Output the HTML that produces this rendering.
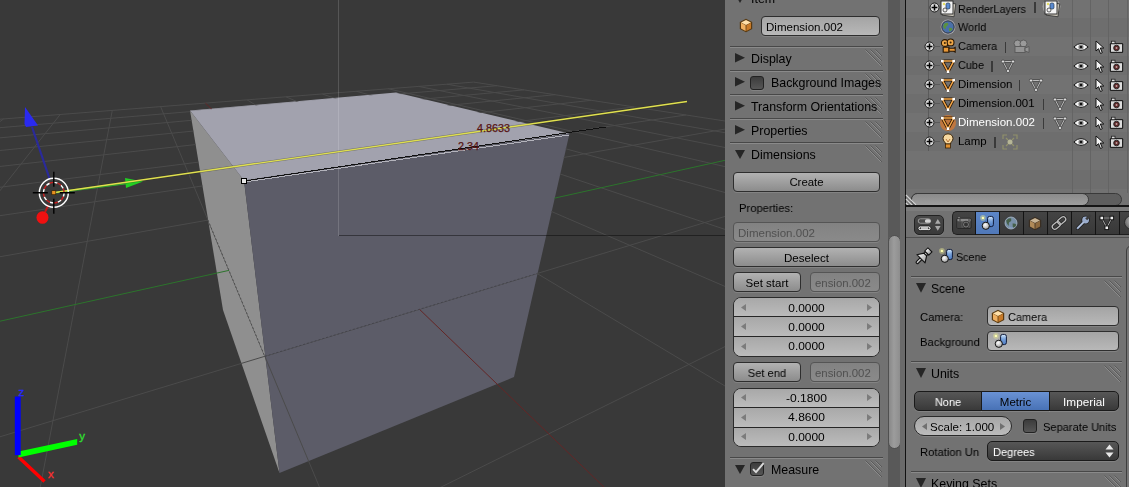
<!DOCTYPE html>
<html><head><meta charset="utf-8"><style>
html,body{margin:0;padding:0;width:1129px;height:487px;overflow:hidden;background:#727272}
body{position:relative;font-family:"Liberation Sans",sans-serif}
.t{position:absolute;white-space:pre;line-height:1;font-family:"Liberation Sans",sans-serif;will-change:transform}
svg{overflow:visible}
</style></head><body>
<svg width="725" height="487" viewBox="0 0 725 487" style="position:absolute;left:0;top:0;display:block">
<defs><clipPath id="outside"><path clip-rule="evenodd" d="M-10 -10H740V500H-10Z M190.0,111.0 L396.0,93.0 L569.0,134.0 L537.1,273.5 L264.8,356.3 L208.0,220.1Z"/></clipPath></defs>
<rect width="725" height="487" fill="#393939"/>
<polygon points="190.0,110.5 244.0,180.5 279.5,473.0 223.0,310.0" fill="#8f8f8f"/>
<polygon points="190.0,110.5 396.0,92.5 569.5,133.5 244.0,180.5" fill="#a2a2ae"/>
<polygon points="244.0,180.5 569.5,133.5 514.0,377.0 279.5,473.0" fill="#5c5c68"/>
<g clip-path="url(#outside)" fill="none" stroke-width="1">
<path d="M-5.0 119.6L473.7 82.1M-5.0 128.1L497.1 85.7M-5.0 138.3L523.9 89.9M-5.0 151.0L554.9 94.7M-5.0 167.0L591.2 100.3M3.6 118.9L-5.0 125.2M-5.0 187.9L634.1 106.9M60.2 114.5L-5.0 197.0M-5.0 216.4L685.9 115.0M112.3 110.4L39.3 492.0M-5.0 257.6L730.0 128.2M160.6 106.6L321.5 492.0M-5.0 438.3L730.0 214.9M247.1 99.9L730.0 389.0M431.1 492.0L730.0 344.1M286.0 96.8L730.0 288.6M322.3 94.0L730.0 231.1M356.4 91.3L730.0 193.9M388.4 88.8L730.0 167.8M418.5 86.4L730.0 148.5M446.9 84.2L730.0 133.6M473.7 82.1L730.0 121.8" stroke="#4b4b4b"/>
<path d="M205.4 103.1L609.1 492.0" stroke="#642626"/>
<path d="M-5.0 322.3L730.0 159.2" stroke="#2c742c"/>
</g>
<path d="M264.8 356.3L537.1 273.5" stroke="#45454d" stroke-dasharray="2 2" fill="none"/>
<path d="M208.0 220.1L264.8 356.3" stroke="#505050" stroke-dasharray="2 2" fill="none"/>
<line x1="338.5" y1="0" x2="338.5" y2="236" stroke="#fff" stroke-opacity="0.15"/>
<line x1="339" y1="235.5" x2="725" y2="235.5" stroke="#000" stroke-opacity="0.42"/>
<line x1="244" y1="182" x2="569" y2="135" stroke="#b4b4bc" stroke-width="1" shape-rendering="crispEdges"/>
<line x1="244" y1="181" x2="606" y2="127" stroke="#101010" stroke-width="1" shape-rendering="crispEdges"/>
<line x1="49.5" y1="178.5" x2="32" y2="127" stroke="#2a2a9a" stroke-width="2.2"/>
<polygon points="25,107 24.5,124 26,127 38,125.5" fill="#2a2af0"/>
<line x1="48.5" y1="205" x2="45" y2="212" stroke="#c01818" stroke-width="2"/>
<ellipse cx="42.5" cy="217.5" rx="6" ry="6.3" fill="#f01010"/>
<line x1="53.8" y1="192.7" x2="128" y2="183" stroke="#30c030" stroke-width="2"/>
<polygon points="125,178 143,181.5 126,188" fill="#22d022"/>
<line x1="55" y1="192.5" x2="687" y2="101.5" stroke="#2a2a10" stroke-width="2.4" stroke-opacity="0.4"/>
<line x1="55" y1="192.5" x2="687" y2="101.5" stroke="#e0e050" stroke-width="1.4"/>
<rect x="241.5" y="178.5" width="5" height="5" fill="#e8e8e8" stroke="#000" stroke-width="1"/>
<circle cx="53.8" cy="192.7" r="14.5" fill="none" stroke="#ffffff" stroke-width="1.4"/>
<circle cx="53.8" cy="192.7" r="10.3" fill="none" stroke="#ffffff" stroke-width="1.4" stroke-dasharray="4 4"/>
<circle cx="53.8" cy="192.7" r="10.3" fill="none" stroke="#c82020" stroke-width="1.4" stroke-dasharray="4 4" stroke-dashoffset="4"/>
<path d="M32.8 192.7H47.8M59.8 192.7H74.8M53.8 171.7V186.7M53.8 198.7V213.7" stroke="#000" stroke-width="1.4"/>
<rect x="51.8" y="190.7" width="4" height="4" fill="#e89020" stroke="#2a1a00" stroke-width="0.6"/>
<text x="477" y="132" font-family="Liberation Sans" font-size="10.8" fill="#561414" stroke="#561414" stroke-width="0.25">4.8633</text>
<text x="458" y="150" font-family="Liberation Sans" font-size="10.8" fill="#561414" stroke="#561414" stroke-width="0.25">2.34</text>
<line x1="18.5" y1="457" x2="44.5" y2="481.5" stroke="#ff0000" stroke-width="3.4"/>
<polygon points="18.5,451.6 77.2,439 77.2,444.8 18.5,457.4" fill="#00ff00"/>
<rect x="14.8" y="396.5" width="5.9" height="58.6" fill="#0000ff"/>
<text x="18.6" y="395.5" font-family="Liberation Sans" font-size="11.5" fill="#2828ff" stroke="#2828ff" stroke-width="0.3">z</text>
<text x="79.3" y="439.8" font-family="Liberation Sans" font-size="11.5" fill="#30e030" stroke="#30e030" stroke-width="0.3">y</text>
<text x="48" y="478.2" font-family="Liberation Sans" font-size="11.5" fill="#ff3030" stroke="#ff3030" stroke-width="0.3">x</text>
</svg>
<div style="position:absolute;left:725px;top:0px;width:163px;height:487px;background:#727272"></div>
<svg style="position:absolute;left:735px;top:-6px" width="10" height="9"><polygon points="0,0 10,0 5.0,9" fill="#262626"/></svg>
<div class="t" style="left:750.5px;top:-7.50px;font-size:12.4px;color:#000;transform-origin:0 0;">Item</div>
<svg style="position:absolute;left:739px;top:18px" width="14" height="15" viewBox="0 0 14 15">
<path d="M7 0.8 L13.2 4 L13.2 11 L7 14.2 L0.8 11 L0.8 4 Z" fill="#5a3a10" />
<path d="M7 2 L12 4.5 L7 7 L2 4.5 Z" fill="#ffe0a8"/>
<path d="M2 4.8 L6.6 7.2 L6.6 13 L2 10.6 Z" fill="#f0b060"/>
<path d="M7.4 7.2 L12 4.8 L12 10.6 L7.4 13 Z" fill="#c87a28"/>
</svg>
<div style="position:absolute;left:761px;top:16px;width:119px;height:20px;box-sizing:border-box;border:1px solid #2e2e2e;border-radius:4px;background:linear-gradient(#a4a4a4,#b8b8b8);box-shadow:0 1px 0 rgba(255,255,255,0.12);"></div>
<div class="t" style="left:766px;top:21.95px;font-size:11.4px;color:#000;transform-origin:0 0;transform:scaleX(1.013);">Dimension.002</div>
<div style="position:absolute;left:730px;top:46px;width:153px;height:1px;background:#484848"></div>
<div style="position:absolute;left:730px;top:47px;width:153px;height:1px;background:#8a8a8a"></div>
<svg style="position:absolute;left:865px;top:49px" width="18" height="18"><path d="M0.5 0.5 L17 17" stroke="#5a5a5a" stroke-width="1" fill="none"/><path d="M0.5 1.5 L16 17" stroke="#8c8c8c" stroke-width="1" fill="none"/><path d="M5.5 0.5 L17 12" stroke="#5a5a5a" stroke-width="1" fill="none"/><path d="M5.5 1.5 L16 12" stroke="#8c8c8c" stroke-width="1" fill="none"/><path d="M10.5 0.5 L17 7" stroke="#5a5a5a" stroke-width="1" fill="none"/><path d="M10.5 1.5 L16 7" stroke="#8c8c8c" stroke-width="1" fill="none"/></svg>
<svg style="position:absolute;left:735px;top:53px" width="10" height="9.6"><polygon points="0,0 10,4.8 0,9.6" fill="#262626"/></svg>
<div class="t" style="left:750.5px;top:52.50px;font-size:12.4px;color:#000;transform-origin:0 0;">Display</div>
<div style="position:absolute;left:730px;top:70px;width:153px;height:1px;background:#484848"></div>
<div style="position:absolute;left:730px;top:71px;width:153px;height:1px;background:#8a8a8a"></div>
<svg style="position:absolute;left:865px;top:73px" width="18" height="18"><path d="M0.5 0.5 L17 17" stroke="#5a5a5a" stroke-width="1" fill="none"/><path d="M0.5 1.5 L16 17" stroke="#8c8c8c" stroke-width="1" fill="none"/><path d="M5.5 0.5 L17 12" stroke="#5a5a5a" stroke-width="1" fill="none"/><path d="M5.5 1.5 L16 12" stroke="#8c8c8c" stroke-width="1" fill="none"/><path d="M10.5 0.5 L17 7" stroke="#5a5a5a" stroke-width="1" fill="none"/><path d="M10.5 1.5 L16 7" stroke="#8c8c8c" stroke-width="1" fill="none"/></svg>
<svg style="position:absolute;left:735px;top:77px" width="10" height="9.6"><polygon points="0,0 10,4.8 0,9.6" fill="#262626"/></svg>
<div style="position:absolute;left:750px;top:76px;width:14px;height:14px;box-sizing:border-box;border:1px solid #222;border-radius:3px;background:linear-gradient(#3c3c3c,#565656);box-shadow:0 1px 0 rgba(255,255,255,0.12);"></div>
<div class="t" style="left:771px;top:76.50px;font-size:12.4px;color:#000;transform-origin:0 0;">Background Images</div>
<div style="position:absolute;left:730px;top:94px;width:153px;height:1px;background:#484848"></div>
<div style="position:absolute;left:730px;top:95px;width:153px;height:1px;background:#8a8a8a"></div>
<svg style="position:absolute;left:865px;top:97px" width="18" height="18"><path d="M0.5 0.5 L17 17" stroke="#5a5a5a" stroke-width="1" fill="none"/><path d="M0.5 1.5 L16 17" stroke="#8c8c8c" stroke-width="1" fill="none"/><path d="M5.5 0.5 L17 12" stroke="#5a5a5a" stroke-width="1" fill="none"/><path d="M5.5 1.5 L16 12" stroke="#8c8c8c" stroke-width="1" fill="none"/><path d="M10.5 0.5 L17 7" stroke="#5a5a5a" stroke-width="1" fill="none"/><path d="M10.5 1.5 L16 7" stroke="#8c8c8c" stroke-width="1" fill="none"/></svg>
<svg style="position:absolute;left:735px;top:101px" width="10" height="9.6"><polygon points="0,0 10,4.8 0,9.6" fill="#262626"/></svg>
<div class="t" style="left:750.5px;top:100.50px;font-size:12.4px;color:#000;transform-origin:0 0;">Transform Orientations</div>
<div style="position:absolute;left:730px;top:118px;width:153px;height:1px;background:#484848"></div>
<div style="position:absolute;left:730px;top:119px;width:153px;height:1px;background:#8a8a8a"></div>
<svg style="position:absolute;left:865px;top:121px" width="18" height="18"><path d="M0.5 0.5 L17 17" stroke="#5a5a5a" stroke-width="1" fill="none"/><path d="M0.5 1.5 L16 17" stroke="#8c8c8c" stroke-width="1" fill="none"/><path d="M5.5 0.5 L17 12" stroke="#5a5a5a" stroke-width="1" fill="none"/><path d="M5.5 1.5 L16 12" stroke="#8c8c8c" stroke-width="1" fill="none"/><path d="M10.5 0.5 L17 7" stroke="#5a5a5a" stroke-width="1" fill="none"/><path d="M10.5 1.5 L16 7" stroke="#8c8c8c" stroke-width="1" fill="none"/></svg>
<svg style="position:absolute;left:735px;top:125px" width="10" height="9.6"><polygon points="0,0 10,4.8 0,9.6" fill="#262626"/></svg>
<div class="t" style="left:750.5px;top:124.50px;font-size:12.4px;color:#000;transform-origin:0 0;">Properties</div>
<div style="position:absolute;left:730px;top:142px;width:153px;height:1px;background:#484848"></div>
<div style="position:absolute;left:730px;top:143px;width:153px;height:1px;background:#8a8a8a"></div>
<svg style="position:absolute;left:735px;top:150px" width="10" height="9"><polygon points="0,0 10,0 5.0,9" fill="#262626"/></svg>
<div class="t" style="left:750.5px;top:148.50px;font-size:12.4px;color:#000;transform-origin:0 0;">Dimensions</div>
<svg style="position:absolute;left:865px;top:145px" width="18" height="18"><path d="M0.5 0.5 L17 17" stroke="#5a5a5a" stroke-width="1" fill="none"/><path d="M0.5 1.5 L16 17" stroke="#8c8c8c" stroke-width="1" fill="none"/><path d="M5.5 0.5 L17 12" stroke="#5a5a5a" stroke-width="1" fill="none"/><path d="M5.5 1.5 L16 12" stroke="#8c8c8c" stroke-width="1" fill="none"/><path d="M10.5 0.5 L17 7" stroke="#5a5a5a" stroke-width="1" fill="none"/><path d="M10.5 1.5 L16 7" stroke="#8c8c8c" stroke-width="1" fill="none"/></svg>
<div style="position:absolute;left:733px;top:172px;width:147px;height:20px;box-sizing:border-box;border:1px solid #2e2e2e;border-radius:4px;background:linear-gradient(#b2b2b2,#8c8c8c);box-shadow:0 1px 0 rgba(255,255,255,0.12);"></div>
<div class="t" style="left:733px;width:147px;text-align:center;top:177.15px;font-size:11.4px;color:#000;transform-origin:50% 0;transform:scaleX(0.994);">Create</div>
<div class="t" style="left:738.5px;top:202.65px;font-size:11.4px;color:#000;transform-origin:0 0;transform:scaleX(0.983);">Properties:</div>
<div style="position:absolute;left:733px;top:222px;width:147px;height:20px;box-sizing:border-box;border:1px solid #555;border-radius:4px;background:linear-gradient(#828282,#8a8a8a);box-shadow:0 1px 0 rgba(255,255,255,0.12);"></div>
<div class="t" style="left:738px;top:227.65px;font-size:11.4px;color:#505050;transform-origin:0 0;transform:scaleX(1.013);">Dimension.002</div>
<div style="position:absolute;left:733px;top:247px;width:147px;height:20px;box-sizing:border-box;border:1px solid #2e2e2e;border-radius:4px;background:linear-gradient(#b2b2b2,#8c8c8c);box-shadow:0 1px 0 rgba(255,255,255,0.12);"></div>
<div class="t" style="left:733px;width:147px;text-align:center;top:252.65px;font-size:11.4px;color:#000;transform-origin:50% 0;transform:scaleX(1.014);">Deselect</div>
<div style="position:absolute;left:733px;top:272px;width:68px;height:20px;box-sizing:border-box;border:1px solid #2e2e2e;border-radius:4px;background:linear-gradient(#b2b2b2,#8c8c8c);box-shadow:0 1px 0 rgba(255,255,255,0.12);"></div>
<div class="t" style="left:733px;width:68px;text-align:center;top:277.65px;font-size:11.4px;color:#000;transform-origin:50% 0;transform:scaleX(1.010);">Set start</div>
<div style="position:absolute;left:810px;top:272px;width:70px;height:20px;box-sizing:border-box;border:1px solid #555;border-radius:4px;background:linear-gradient(#828282,#8a8a8a);box-shadow:0 1px 0 rgba(255,255,255,0.12);"></div>
<div class="t" style="left:815px;top:277.65px;font-size:11.4px;color:#505050;transform-origin:0 0;transform:scaleX(1.000);">ension.002</div>
<div style="position:absolute;left:733px;top:297px;width:147px;height:59.5px;box-sizing:border-box;border:1px solid #2a2a2a;border-radius:8px;overflow:hidden;background:#b0b0b0"></div>
<div style="position:absolute;left:734px;top:298px;width:145px;height:18.5px;background:linear-gradient(#a8a8a8,#bcbcbc);border-radius:7px 7px 0 0;"></div>
<svg style="position:absolute;left:741px;top:303.75px" width="5" height="7"><polygon points="5,0 0,3.5 5,7" fill="#7c7c7c"/></svg>
<svg style="position:absolute;left:867px;top:303.75px" width="5" height="7"><polygon points="0,0 5,3.5 0,7" fill="#7c7c7c"/></svg>
<div class="t" style="left:733px;width:147px;text-align:center;top:302.70px;font-size:11.4px;color:#000;transform-origin:50% 0;transform:scaleX(1.046);">0.0000</div>
<div style="position:absolute;left:734px;top:316.5px;width:145px;height:20px;background:linear-gradient(#a8a8a8,#bcbcbc);"></div>
<div style="position:absolute;left:734px;top:316.0px;width:145px;height:1.3px;background:#262626"></div>
<svg style="position:absolute;left:741px;top:323.0px" width="5" height="7"><polygon points="5,0 0,3.5 5,7" fill="#7c7c7c"/></svg>
<svg style="position:absolute;left:867px;top:323.0px" width="5" height="7"><polygon points="0,0 5,3.5 0,7" fill="#7c7c7c"/></svg>
<div class="t" style="left:733px;width:147px;text-align:center;top:321.95px;font-size:11.4px;color:#000;transform-origin:50% 0;transform:scaleX(1.046);">0.0000</div>
<div style="position:absolute;left:734px;top:336.5px;width:145px;height:19px;background:linear-gradient(#a8a8a8,#bcbcbc);border-radius:0 0 7px 7px;"></div>
<div style="position:absolute;left:734px;top:336.0px;width:145px;height:1.3px;background:#262626"></div>
<svg style="position:absolute;left:741px;top:342.5px" width="5" height="7"><polygon points="5,0 0,3.5 5,7" fill="#7c7c7c"/></svg>
<svg style="position:absolute;left:867px;top:342.5px" width="5" height="7"><polygon points="0,0 5,3.5 0,7" fill="#7c7c7c"/></svg>
<div class="t" style="left:733px;width:147px;text-align:center;top:341.45px;font-size:11.4px;color:#000;transform-origin:50% 0;transform:scaleX(1.046);">0.0000</div>
<div style="position:absolute;left:733px;top:387.5px;width:147px;height:59.5px;box-sizing:border-box;border:1px solid #2a2a2a;border-radius:8px;overflow:hidden;background:#b0b0b0"></div>
<div style="position:absolute;left:734px;top:388.5px;width:145px;height:18.5px;background:linear-gradient(#a8a8a8,#bcbcbc);border-radius:7px 7px 0 0;"></div>
<svg style="position:absolute;left:741px;top:394.25px" width="5" height="7"><polygon points="5,0 0,3.5 5,7" fill="#7c7c7c"/></svg>
<svg style="position:absolute;left:867px;top:394.25px" width="5" height="7"><polygon points="0,0 5,3.5 0,7" fill="#7c7c7c"/></svg>
<div class="t" style="left:733px;width:147px;text-align:center;top:393.20px;font-size:11.4px;color:#000;transform-origin:50% 0;transform:scaleX(1.061);">-0.1800</div>
<div style="position:absolute;left:734px;top:407.0px;width:145px;height:20px;background:linear-gradient(#a8a8a8,#bcbcbc);"></div>
<div style="position:absolute;left:734px;top:406.5px;width:145px;height:1.3px;background:#262626"></div>
<svg style="position:absolute;left:741px;top:413.5px" width="5" height="7"><polygon points="5,0 0,3.5 5,7" fill="#7c7c7c"/></svg>
<svg style="position:absolute;left:867px;top:413.5px" width="5" height="7"><polygon points="0,0 5,3.5 0,7" fill="#7c7c7c"/></svg>
<div class="t" style="left:733px;width:147px;text-align:center;top:412.45px;font-size:11.4px;color:#000;transform-origin:50% 0;transform:scaleX(1.057);">4.8600</div>
<div style="position:absolute;left:734px;top:427.0px;width:145px;height:19px;background:linear-gradient(#a8a8a8,#bcbcbc);border-radius:0 0 7px 7px;"></div>
<div style="position:absolute;left:734px;top:426.5px;width:145px;height:1.3px;background:#262626"></div>
<svg style="position:absolute;left:741px;top:433.0px" width="5" height="7"><polygon points="5,0 0,3.5 5,7" fill="#7c7c7c"/></svg>
<svg style="position:absolute;left:867px;top:433.0px" width="5" height="7"><polygon points="0,0 5,3.5 0,7" fill="#7c7c7c"/></svg>
<div class="t" style="left:733px;width:147px;text-align:center;top:431.95px;font-size:11.4px;color:#000;transform-origin:50% 0;transform:scaleX(1.046);">0.0000</div>
<div style="position:absolute;left:733px;top:362px;width:68px;height:20px;box-sizing:border-box;border:1px solid #2e2e2e;border-radius:4px;background:linear-gradient(#b2b2b2,#8c8c8c);box-shadow:0 1px 0 rgba(255,255,255,0.12);"></div>
<div class="t" style="left:733px;width:68px;text-align:center;top:367.65px;font-size:11.4px;color:#000;transform-origin:50% 0;transform:scaleX(0.974);">Set end</div>
<div style="position:absolute;left:810px;top:362px;width:70px;height:20px;box-sizing:border-box;border:1px solid #555;border-radius:4px;background:linear-gradient(#828282,#8a8a8a);box-shadow:0 1px 0 rgba(255,255,255,0.12);"></div>
<div class="t" style="left:815px;top:367.65px;font-size:11.4px;color:#505050;transform-origin:0 0;transform:scaleX(1.000);">ension.002</div>
<div style="position:absolute;left:730px;top:457px;width:153px;height:1px;background:#484848"></div>
<div style="position:absolute;left:730px;top:458px;width:153px;height:1px;background:#8a8a8a"></div>
<svg style="position:absolute;left:735px;top:465px" width="10" height="9"><polygon points="0,0 10,0 5.0,9" fill="#262626"/></svg>
<div style="position:absolute;left:750px;top:462px;width:14px;height:14px;box-sizing:border-box;border:1px solid #222;border-radius:3px;background:linear-gradient(#3c3c3c,#565656);box-shadow:0 1px 0 rgba(255,255,255,0.12);"></div>
<svg style="position:absolute;left:750px;top:462px" width="14" height="14"><path d="M3 7.2 L6 10.2 L13.6 1.2" stroke="#dcdcdc" stroke-width="1.9" fill="none"/></svg>
<div class="t" style="left:770.5px;top:464.20px;font-size:12.4px;color:#000;transform-origin:0 0;">Measure</div>
<svg style="position:absolute;left:865px;top:460px" width="18" height="18"><path d="M0.5 0.5 L17 17" stroke="#5a5a5a" stroke-width="1" fill="none"/><path d="M0.5 1.5 L16 17" stroke="#8c8c8c" stroke-width="1" fill="none"/><path d="M5.5 0.5 L17 12" stroke="#5a5a5a" stroke-width="1" fill="none"/><path d="M5.5 1.5 L16 12" stroke="#8c8c8c" stroke-width="1" fill="none"/><path d="M10.5 0.5 L17 7" stroke="#5a5a5a" stroke-width="1" fill="none"/><path d="M10.5 1.5 L16 7" stroke="#8c8c8c" stroke-width="1" fill="none"/></svg>
<div style="position:absolute;left:888px;top:0px;width:12px;height:487px;background:#595959"></div>
<div style="position:absolute;left:888px;top:235px;width:13px;height:214px;box-sizing:border-box;border-radius:6.5px;background:linear-gradient(90deg,#888888,#9c9c9c 45%,#8e8e8e);border:1px solid #505050"></div>
<div style="position:absolute;left:900px;top:0px;width:5px;height:487px;background:#6a6a6a"></div>
<div style="position:absolute;left:905px;top:0px;width:1.5px;height:487px;background:#111"></div>

<div style="position:absolute;left:906px;top:0px;width:223px;height:206px;background:#727272"></div>
<div style="position:absolute;left:906px;top:18px;width:223px;height:19px;background:#6e6e6e"></div>
<div style="position:absolute;left:906px;top:56px;width:223px;height:19px;background:#6e6e6e"></div>
<div style="position:absolute;left:906px;top:94px;width:223px;height:19px;background:#6e6e6e"></div>
<div style="position:absolute;left:906px;top:132px;width:223px;height:19px;background:#6e6e6e"></div>
<div style="position:absolute;left:906px;top:170px;width:223px;height:19px;background:#6e6e6e"></div>
<div style="position:absolute;left:906px;top:208px;width:223px;height:19px;background:#6e6e6e"></div>
<div style="position:absolute;left:928px;top:0px;width:1px;height:151px;background:#5a5a5a"></div>
<div style="position:absolute;left:1072px;top:0px;width:1px;height:193px;background:#646464"></div>
<div style="position:absolute;left:1090px;top:0px;width:1px;height:193px;background:#646464"></div>
<div style="position:absolute;left:1108px;top:0px;width:1px;height:193px;background:#646464"></div>
<div style="position:absolute;left:1127px;top:0px;width:1px;height:193px;background:#646464"></div>
<svg style="position:absolute;left:929px;top:2px" width="11" height="11" viewBox="0 0 11 11"><circle cx="5.5" cy="5.5" r="4.5" fill="#d8d8d8" stroke="#1a1a1a" stroke-width="1"/><path d="M2.6 5.5H8.4M5.5 2.6V8.4" stroke="#000" stroke-width="1.5"/></svg>
<svg style="position:absolute;left:940px;top:0px" width="16" height="17" viewBox="0 0 16 17"><rect x="3" y="3" width="12" height="13" fill="#c8c4b8" stroke="#333" stroke-width="0.8" transform="rotate(8 9 9)"/><rect x="1" y="1" width="12" height="13" fill="#f4f4f4" stroke="#222" stroke-width="0.9"/><circle cx="4" cy="4" r="1.2" fill="#e8e060"/><rect x="6" y="3" width="4" height="6" rx="1.5" fill="#5a8ad0" stroke="#123" stroke-width="0.6"/><circle cx="5" cy="10" r="2" fill="#eee" stroke="#222" stroke-width="0.7"/></svg>
<div class="t" style="left:958.2px;top:3.55px;font-size:11.4px;color:#000;transform-origin:0 0;transform:scaleX(0.950);">RenderLayers</div>
<div style="position:absolute;left:1034px;top:2px;width:1.8px;height:11px;background:#3a3a3a"></div>
<svg style="position:absolute;left:1042px;top:-2px" width="20" height="20"><circle cx="9.5" cy="8.5" r="9" fill="#e0e0e0" opacity="0.4"/></svg><svg style="position:absolute;left:1043.5px;top:0px" width="16" height="17" viewBox="0 0 16 17"><rect x="3" y="3" width="12" height="13" fill="#c8c4b8" stroke="#333" stroke-width="0.8" transform="rotate(8 9 9)"/><rect x="1" y="1" width="12" height="13" fill="#f4f4f4" stroke="#222" stroke-width="0.9"/><circle cx="4" cy="4" r="1.2" fill="#e8e060"/><rect x="6" y="3" width="4" height="6" rx="1.5" fill="#5a8ad0" stroke="#123" stroke-width="0.6"/><circle cx="5" cy="10" r="2" fill="#eee" stroke="#222" stroke-width="0.7"/></svg>
<svg style="position:absolute;left:940px;top:19px" width="16" height="16" viewBox="0 0 16 16"><circle cx="8" cy="8" r="7.4" fill="#c8c8d8" opacity="0.7"/><circle cx="8" cy="8" r="6.2" fill="#4a70a8" stroke="#222" stroke-width="0.8"/><path d="M4 5 Q6 3 8 4 Q9 6 7 7 Q5 8 6 10 Q4 10 3 8Z M9 9 Q11 8 12.5 10 Q11 13 9 12Z" fill="#5a9040"/></svg>
<div class="t" style="left:958.2px;top:22.25px;font-size:11.4px;color:#000;transform-origin:0 0;transform:scaleX(0.955);">World</div>
<svg style="position:absolute;left:924px;top:41px" width="11" height="11" viewBox="0 0 11 11"><circle cx="5.5" cy="5.5" r="4.5" fill="#d8d8d8" stroke="#1a1a1a" stroke-width="1"/><path d="M2.6 5.5H8.4M5.5 2.6V8.4" stroke="#000" stroke-width="1.5"/></svg>
<div style="position:absolute;left:934px;top:46px;width:6px;height:1px;background:#5a5a5a"></div>
<svg style="position:absolute;left:940px;top:38.0px" width="17" height="16" viewBox="0 0 17 16"><g stroke="#2a1806" stroke-width="1.1"><circle cx="4.8" cy="5" r="3.4" fill="#f0a848"/><circle cx="10.6" cy="4.4" r="3.4" fill="#f0a848"/><rect x="3.2" y="9.2" width="5.8" height="5" fill="#e89838"/><path d="M9 10.2 L13.6 10.2 L15.2 9.4 L15.2 14 L13.6 13.2 L9 13.2Z" fill="#e89838"/></g><circle cx="4.8" cy="5" r="1" fill="#3a2408"/><circle cx="10.6" cy="4.4" r="1" fill="#3a2408"/></svg>
<div class="t" style="left:958.2px;top:41.45px;font-size:11.4px;color:#000;transform-origin:0 0;transform:scaleX(0.963);">Camera</div>
<div style="position:absolute;left:1004.8px;top:41.5px;width:1.5px;height:11px;background:#3a3a3a"></div>
<svg style="position:absolute;left:1012.8px;top:38.5px" width="17" height="16" viewBox="0 0 17 16" opacity="0.75"><g stroke="#555" stroke-width="1"><circle cx="4.5" cy="4.5" r="3.5" fill="#a8a8a8"/><circle cx="10.5" cy="4.5" r="3.5" fill="#a8a8a8"/><rect x="2" y="7.5" width="10" height="6" fill="#a0a0a0"/><path d="M12 9 L16 7.5 L16 13.5 L12 12 Z" fill="#a0a0a0"/></g></svg>
<svg style="position:absolute;left:1072.5px;top:41.5px" width="16" height="10" viewBox="0 0 16 10"><path d="M0.8 5 Q8 -2 15.2 5 Q8 12 0.8 5Z" fill="#f2f2f2" stroke="#202020" stroke-width="1"/><circle cx="8" cy="5" r="2.6" fill="#8a8a8a"/><circle cx="8" cy="5" r="1.3" fill="#111"/></svg>
<svg style="position:absolute;left:1095px;top:39.5px" width="10" height="15" viewBox="0 0 10 15"><path d="M1 1 L1 11 L3.5 8.7 L5.5 13.5 L7.3 12.7 L5.3 8 L8.8 8 Z" fill="#f4f4f4" stroke="#111" stroke-width="1"/></svg>
<svg style="position:absolute;left:1109px;top:39.5px" width="15" height="14" viewBox="0 0 15 14"><rect x="0.8" y="3" width="13.4" height="10" rx="1.2" fill="#222"/><rect x="2" y="4.2" width="11" height="7.6" fill="#dcdcdc"/><rect x="2.5" y="1.2" width="3.5" height="2.5" fill="#ddd" stroke="#222" stroke-width="0.8"/><circle cx="7.5" cy="8" r="2.8" fill="#602828" stroke="#222" stroke-width="0.9"/><circle cx="7.5" cy="8" r="1" fill="#c0a0a0"/></svg>
<svg style="position:absolute;left:924px;top:60px" width="11" height="11" viewBox="0 0 11 11"><circle cx="5.5" cy="5.5" r="4.5" fill="#d8d8d8" stroke="#1a1a1a" stroke-width="1"/><path d="M2.6 5.5H8.4M5.5 2.6V8.4" stroke="#000" stroke-width="1.5"/></svg>
<div style="position:absolute;left:934px;top:65px;width:6px;height:1px;background:#5a5a5a"></div>
<svg style="position:absolute;left:940px;top:57.5px" width="16" height="16" viewBox="0 0 16 16"><path d="M2.2 3 L13.8 3 L8 13.8 Z" fill="none" stroke="#2a1806" stroke-width="3" stroke-linejoin="round"/><path d="M2.2 3 L13.8 3 L8 13.8 Z" fill="none" stroke="#f4a648" stroke-width="1.5" stroke-linejoin="round"/><rect x="1" y="1.8" width="2.6" height="2.6" fill="#fff"/><rect x="12.4" y="1.8" width="2.6" height="2.6" fill="#fff"/><rect x="6.7" y="12.4" width="2.6" height="2.6" fill="#fff"/></svg>
<div class="t" style="left:958.2px;top:60.45px;font-size:11.4px;color:#000;transform-origin:0 0;transform:scaleX(0.954);">Cube</div>
<div style="position:absolute;left:991.1px;top:60.5px;width:1.5px;height:11px;background:#3a3a3a"></div>
<svg style="position:absolute;left:1000.1px;top:57.5px" width="16" height="16" viewBox="0 0 16 16"><path d="M3 3.5 L13 3.5 L8 13 Z" fill="none" stroke="#4a4a4a" stroke-width="2.4"/><path d="M3 3.5 L13 3.5 L8 13 Z" fill="none" stroke="#bdbdbd" stroke-width="1"/><circle cx="3" cy="3.5" r="1.6" fill="#ddd" stroke="#444" stroke-width="0.7"/><circle cx="13" cy="3.5" r="1.6" fill="#ddd" stroke="#444" stroke-width="0.7"/><circle cx="8" cy="13" r="1.6" fill="#ddd" stroke="#444" stroke-width="0.7"/></svg>
<svg style="position:absolute;left:1072.5px;top:60.5px" width="16" height="10" viewBox="0 0 16 10"><path d="M0.8 5 Q8 -2 15.2 5 Q8 12 0.8 5Z" fill="#f2f2f2" stroke="#202020" stroke-width="1"/><circle cx="8" cy="5" r="2.6" fill="#8a8a8a"/><circle cx="8" cy="5" r="1.3" fill="#111"/></svg>
<svg style="position:absolute;left:1095px;top:58.5px" width="10" height="15" viewBox="0 0 10 15"><path d="M1 1 L1 11 L3.5 8.7 L5.5 13.5 L7.3 12.7 L5.3 8 L8.8 8 Z" fill="#f4f4f4" stroke="#111" stroke-width="1"/></svg>
<svg style="position:absolute;left:1109px;top:58.5px" width="15" height="14" viewBox="0 0 15 14"><rect x="0.8" y="3" width="13.4" height="10" rx="1.2" fill="#222"/><rect x="2" y="4.2" width="11" height="7.6" fill="#dcdcdc"/><rect x="2.5" y="1.2" width="3.5" height="2.5" fill="#ddd" stroke="#222" stroke-width="0.8"/><circle cx="7.5" cy="8" r="2.8" fill="#602828" stroke="#222" stroke-width="0.9"/><circle cx="7.5" cy="8" r="1" fill="#c0a0a0"/></svg>
<svg style="position:absolute;left:924px;top:79px" width="11" height="11" viewBox="0 0 11 11"><circle cx="5.5" cy="5.5" r="4.5" fill="#d8d8d8" stroke="#1a1a1a" stroke-width="1"/><path d="M2.6 5.5H8.4M5.5 2.6V8.4" stroke="#000" stroke-width="1.5"/></svg>
<div style="position:absolute;left:934px;top:84px;width:6px;height:1px;background:#5a5a5a"></div>
<svg style="position:absolute;left:940px;top:76.5px" width="16" height="16" viewBox="0 0 16 16"><path d="M2.2 3 L13.8 3 L8 13.8 Z" fill="none" stroke="#2a1806" stroke-width="3" stroke-linejoin="round"/><path d="M2.2 3 L13.8 3 L8 13.8 Z" fill="none" stroke="#f4a648" stroke-width="1.5" stroke-linejoin="round"/><rect x="1" y="1.8" width="2.6" height="2.6" fill="#fff"/><rect x="12.4" y="1.8" width="2.6" height="2.6" fill="#fff"/><rect x="6.7" y="12.4" width="2.6" height="2.6" fill="#fff"/></svg>
<div class="t" style="left:958.2px;top:79.45px;font-size:11.4px;color:#000;transform-origin:0 0;transform:scaleX(1.012);">Dimension</div>
<div style="position:absolute;left:1018.7px;top:79.5px;width:1.5px;height:11px;background:#3a3a3a"></div>
<svg style="position:absolute;left:1027.7px;top:76.5px" width="16" height="16" viewBox="0 0 16 16"><path d="M3 3.5 L13 3.5 L8 13 Z" fill="none" stroke="#4a4a4a" stroke-width="2.4"/><path d="M3 3.5 L13 3.5 L8 13 Z" fill="none" stroke="#bdbdbd" stroke-width="1"/><circle cx="3" cy="3.5" r="1.6" fill="#ddd" stroke="#444" stroke-width="0.7"/><circle cx="13" cy="3.5" r="1.6" fill="#ddd" stroke="#444" stroke-width="0.7"/><circle cx="8" cy="13" r="1.6" fill="#ddd" stroke="#444" stroke-width="0.7"/></svg>
<svg style="position:absolute;left:1072.5px;top:79.5px" width="16" height="10" viewBox="0 0 16 10"><path d="M0.8 5 Q8 -2 15.2 5 Q8 12 0.8 5Z" fill="#f2f2f2" stroke="#202020" stroke-width="1"/><circle cx="8" cy="5" r="2.6" fill="#8a8a8a"/><circle cx="8" cy="5" r="1.3" fill="#111"/></svg>
<svg style="position:absolute;left:1095px;top:77.5px" width="10" height="15" viewBox="0 0 10 15"><path d="M1 1 L1 11 L3.5 8.7 L5.5 13.5 L7.3 12.7 L5.3 8 L8.8 8 Z" fill="#f4f4f4" stroke="#111" stroke-width="1"/></svg>
<svg style="position:absolute;left:1109px;top:77.5px" width="15" height="14" viewBox="0 0 15 14"><rect x="0.8" y="3" width="13.4" height="10" rx="1.2" fill="#222"/><rect x="2" y="4.2" width="11" height="7.6" fill="#dcdcdc"/><rect x="2.5" y="1.2" width="3.5" height="2.5" fill="#ddd" stroke="#222" stroke-width="0.8"/><circle cx="7.5" cy="8" r="2.8" fill="#602828" stroke="#222" stroke-width="0.9"/><circle cx="7.5" cy="8" r="1" fill="#c0a0a0"/></svg>
<svg style="position:absolute;left:924px;top:98px" width="11" height="11" viewBox="0 0 11 11"><circle cx="5.5" cy="5.5" r="4.5" fill="#d8d8d8" stroke="#1a1a1a" stroke-width="1"/><path d="M2.6 5.5H8.4M5.5 2.6V8.4" stroke="#000" stroke-width="1.5"/></svg>
<div style="position:absolute;left:934px;top:103px;width:6px;height:1px;background:#5a5a5a"></div>
<svg style="position:absolute;left:940px;top:95.5px" width="16" height="16" viewBox="0 0 16 16"><path d="M2.2 3 L13.8 3 L8 13.8 Z" fill="none" stroke="#2a1806" stroke-width="3" stroke-linejoin="round"/><path d="M2.2 3 L13.8 3 L8 13.8 Z" fill="none" stroke="#f4a648" stroke-width="1.5" stroke-linejoin="round"/><rect x="1" y="1.8" width="2.6" height="2.6" fill="#fff"/><rect x="12.4" y="1.8" width="2.6" height="2.6" fill="#fff"/><rect x="6.7" y="12.4" width="2.6" height="2.6" fill="#fff"/></svg>
<div class="t" style="left:958.2px;top:98.45px;font-size:11.4px;color:#000;transform-origin:0 0;transform:scaleX(1.008);">Dimension.001</div>
<div style="position:absolute;left:1042.5px;top:98.5px;width:1.5px;height:11px;background:#3a3a3a"></div>
<svg style="position:absolute;left:1051.5px;top:95.5px" width="16" height="16" viewBox="0 0 16 16"><path d="M3 3.5 L13 3.5 L8 13 Z" fill="none" stroke="#4a4a4a" stroke-width="2.4"/><path d="M3 3.5 L13 3.5 L8 13 Z" fill="none" stroke="#bdbdbd" stroke-width="1"/><circle cx="3" cy="3.5" r="1.6" fill="#ddd" stroke="#444" stroke-width="0.7"/><circle cx="13" cy="3.5" r="1.6" fill="#ddd" stroke="#444" stroke-width="0.7"/><circle cx="8" cy="13" r="1.6" fill="#ddd" stroke="#444" stroke-width="0.7"/></svg>
<svg style="position:absolute;left:1072.5px;top:98.5px" width="16" height="10" viewBox="0 0 16 10"><path d="M0.8 5 Q8 -2 15.2 5 Q8 12 0.8 5Z" fill="#f2f2f2" stroke="#202020" stroke-width="1"/><circle cx="8" cy="5" r="2.6" fill="#8a8a8a"/><circle cx="8" cy="5" r="1.3" fill="#111"/></svg>
<svg style="position:absolute;left:1095px;top:96.5px" width="10" height="15" viewBox="0 0 10 15"><path d="M1 1 L1 11 L3.5 8.7 L5.5 13.5 L7.3 12.7 L5.3 8 L8.8 8 Z" fill="#f4f4f4" stroke="#111" stroke-width="1"/></svg>
<svg style="position:absolute;left:1109px;top:96.5px" width="15" height="14" viewBox="0 0 15 14"><rect x="0.8" y="3" width="13.4" height="10" rx="1.2" fill="#222"/><rect x="2" y="4.2" width="11" height="7.6" fill="#dcdcdc"/><rect x="2.5" y="1.2" width="3.5" height="2.5" fill="#ddd" stroke="#222" stroke-width="0.8"/><circle cx="7.5" cy="8" r="2.8" fill="#602828" stroke="#222" stroke-width="0.9"/><circle cx="7.5" cy="8" r="1" fill="#c0a0a0"/></svg>
<svg style="position:absolute;left:924px;top:117px" width="11" height="11" viewBox="0 0 11 11"><circle cx="5.5" cy="5.5" r="4.5" fill="#d8d8d8" stroke="#1a1a1a" stroke-width="1"/><path d="M2.6 5.5H8.4M5.5 2.6V8.4" stroke="#000" stroke-width="1.5"/></svg>
<div style="position:absolute;left:934px;top:122px;width:6px;height:1px;background:#5a5a5a"></div>
<svg style="position:absolute;left:940px;top:114.5px" width="16" height="16" viewBox="0 0 16 16"><circle cx="8" cy="8" r="8" fill="#c8783a" opacity="0.9"/><path d="M2.2 3 L13.8 3 L8 13.8 Z" fill="none" stroke="#2a1806" stroke-width="3" stroke-linejoin="round"/><path d="M2.2 3 L13.8 3 L8 13.8 Z" fill="none" stroke="#f4a648" stroke-width="1.5" stroke-linejoin="round"/><rect x="1" y="1.8" width="2.6" height="2.6" fill="#fff"/><rect x="12.4" y="1.8" width="2.6" height="2.6" fill="#fff"/><rect x="6.7" y="12.4" width="2.6" height="2.6" fill="#fff"/></svg>
<div class="t" style="left:958.2px;top:117.45px;font-size:11.4px;color:#fff;transform-origin:0 0;transform:scaleX(1.013);">Dimension.002</div>
<div style="position:absolute;left:1042.5px;top:117.5px;width:1.5px;height:11px;background:#3a3a3a"></div>
<svg style="position:absolute;left:1051.5px;top:114.5px" width="16" height="16" viewBox="0 0 16 16"><path d="M3 3.5 L13 3.5 L8 13 Z" fill="none" stroke="#4a4a4a" stroke-width="2.4"/><path d="M3 3.5 L13 3.5 L8 13 Z" fill="none" stroke="#bdbdbd" stroke-width="1"/><circle cx="3" cy="3.5" r="1.6" fill="#ddd" stroke="#444" stroke-width="0.7"/><circle cx="13" cy="3.5" r="1.6" fill="#ddd" stroke="#444" stroke-width="0.7"/><circle cx="8" cy="13" r="1.6" fill="#ddd" stroke="#444" stroke-width="0.7"/></svg>
<svg style="position:absolute;left:1072.5px;top:117.5px" width="16" height="10" viewBox="0 0 16 10"><path d="M0.8 5 Q8 -2 15.2 5 Q8 12 0.8 5Z" fill="#f2f2f2" stroke="#202020" stroke-width="1"/><circle cx="8" cy="5" r="2.6" fill="#8a8a8a"/><circle cx="8" cy="5" r="1.3" fill="#111"/></svg>
<svg style="position:absolute;left:1095px;top:115.5px" width="10" height="15" viewBox="0 0 10 15"><path d="M1 1 L1 11 L3.5 8.7 L5.5 13.5 L7.3 12.7 L5.3 8 L8.8 8 Z" fill="#f4f4f4" stroke="#111" stroke-width="1"/></svg>
<svg style="position:absolute;left:1109px;top:115.5px" width="15" height="14" viewBox="0 0 15 14"><rect x="0.8" y="3" width="13.4" height="10" rx="1.2" fill="#222"/><rect x="2" y="4.2" width="11" height="7.6" fill="#dcdcdc"/><rect x="2.5" y="1.2" width="3.5" height="2.5" fill="#ddd" stroke="#222" stroke-width="0.8"/><circle cx="7.5" cy="8" r="2.8" fill="#602828" stroke="#222" stroke-width="0.9"/><circle cx="7.5" cy="8" r="1" fill="#c0a0a0"/></svg>
<svg style="position:absolute;left:924px;top:136px" width="11" height="11" viewBox="0 0 11 11"><circle cx="5.5" cy="5.5" r="4.5" fill="#d8d8d8" stroke="#1a1a1a" stroke-width="1"/><path d="M2.6 5.5H8.4M5.5 2.6V8.4" stroke="#000" stroke-width="1.5"/></svg>
<div style="position:absolute;left:934px;top:141px;width:6px;height:1px;background:#5a5a5a"></div>
<svg style="position:absolute;left:942px;top:133.0px" width="12" height="16" viewBox="0 0 12 16"><path d="M6 0.8 C9.5 0.8 11 3.5 11 5.5 C11 8 8.5 9 8.5 11 L3.5 11 C3.5 9 1 8 1 5.5 C1 3.5 2.5 0.8 6 0.8Z" fill="#f6d8a0" stroke="#3a2408" stroke-width="1"/><path d="M4 6 L6 9 L8 6" stroke="#b06020" fill="none" stroke-width="0.8"/><rect x="3.5" y="11" width="5" height="4" fill="#e09030" stroke="#3a2408" stroke-width="0.8"/></svg>
<div class="t" style="left:958.2px;top:136.45px;font-size:11.4px;color:#000;transform-origin:0 0;transform:scaleX(1.004);">Lamp</div>
<div style="position:absolute;left:994px;top:136.5px;width:1.5px;height:11px;background:#3a3a3a"></div>
<svg style="position:absolute;left:1002px;top:133.5px" width="16" height="16" viewBox="0 0 16 16" opacity="0.8"><g stroke="#9a9a6a" stroke-width="1.2" fill="none"><path d="M1 5V1H5M11 1H15V5M15 11V15H11M5 15H1V11"/><path d="M4 4L6 6M12 4L10 6M4 12L6 10M12 12L10 10"/></g><circle cx="8" cy="8" r="2.5" fill="#c8c8a0"/></svg>
<svg style="position:absolute;left:1072.5px;top:136.5px" width="16" height="10" viewBox="0 0 16 10"><path d="M0.8 5 Q8 -2 15.2 5 Q8 12 0.8 5Z" fill="#f2f2f2" stroke="#202020" stroke-width="1"/><circle cx="8" cy="5" r="2.6" fill="#8a8a8a"/><circle cx="8" cy="5" r="1.3" fill="#111"/></svg>
<svg style="position:absolute;left:1095px;top:134.5px" width="10" height="15" viewBox="0 0 10 15"><path d="M1 1 L1 11 L3.5 8.7 L5.5 13.5 L7.3 12.7 L5.3 8 L8.8 8 Z" fill="#f4f4f4" stroke="#111" stroke-width="1"/></svg>
<svg style="position:absolute;left:1109px;top:134.5px" width="15" height="14" viewBox="0 0 15 14"><rect x="0.8" y="3" width="13.4" height="10" rx="1.2" fill="#222"/><rect x="2" y="4.2" width="11" height="7.6" fill="#dcdcdc"/><rect x="2.5" y="1.2" width="3.5" height="2.5" fill="#ddd" stroke="#222" stroke-width="0.8"/><circle cx="7.5" cy="8" r="2.8" fill="#602828" stroke="#222" stroke-width="0.9"/><circle cx="7.5" cy="8" r="1" fill="#c0a0a0"/></svg>
<div style="position:absolute;left:910.5px;top:193px;width:211.5px;height:13px;box-sizing:border-box;border-radius:6.5px;background:#5e5e5e;border:1px solid #3a3a3a"></div>
<div style="position:absolute;left:910.5px;top:193px;width:178px;height:13px;box-sizing:border-box;border-radius:6.5px;background:linear-gradient(#8a8a8a,#9e9e9e);border:1px solid #3a3a3a"></div>
<svg style="position:absolute;left:906px;top:194px" width="12" height="12"><path d="M0 1L11 12M0 5L7 12M0 9L3 12" stroke="#d0d0d0" stroke-width="1.2"/></svg>
<div style="position:absolute;left:906px;top:205px;width:223px;height:2px;background:#151515"></div>
<div style="position:absolute;left:906px;top:207px;width:223px;height:31px;background:#727272"></div>
<div style="position:absolute;left:906px;top:207px;width:223px;height:4px;background:#7c7c7c"></div>
<div style="position:absolute;left:906px;top:236.5px;width:223px;height:1.5px;background:#505050"></div>
<div style="position:absolute;left:914px;top:215px;width:30px;height:19.5px;box-sizing:border-box;border:1px solid #222;border-radius:5px;background:linear-gradient(#484848,#3a3a3a);box-shadow:0 1px 0 rgba(255,255,255,0.12);"></div>
<svg style="position:absolute;left:914px;top:215px" width="30" height="20" viewBox="0 0 30 20"><rect x="4.2" y="3.8" width="12.5" height="4.4" rx="2.2" fill="#4a4a4a" stroke="#111" stroke-width="0.8"/><rect x="4.2" y="3.8" width="12.5" height="4.4" rx="2.2" fill="none" stroke="#d8d8d8" stroke-width="0.7"/><rect x="11" y="4.2" width="5.4" height="3.6" rx="1.6" fill="#d4d4d4"/><rect x="4" y="11" width="13" height="4.6" rx="2.3" fill="#f0f0f0" stroke="#111" stroke-width="0.8"/><rect x="7" y="12.2" width="7" height="2.2" fill="#bcbcbc"/><path d="M5.2 13.3L6.8 12V14.6Z M15.8 13.3L14.2 12V14.6Z" fill="#111"/><path d="M21 8.8L23.8 4L26.6 8.8Z M21 11L23.8 15.8L26.6 11Z" fill="#a8a8a8"/></svg><div style="position:absolute;left:952px;top:211px;width:177px;height:23.5px;box-sizing:border-box;border-radius:5px 0 0 5px;background:linear-gradient(#444444,#393939);border:1px solid #1e1e1e;border-right:none"></div>
<div style="position:absolute;left:975px;top:211px;width:24px;height:23.5px;background:linear-gradient(#5c86c8,#5078b8);border-top:1px solid #1e1e1e;border-bottom:1px solid #1e1e1e;box-sizing:border-box"></div>
<div style="position:absolute;left:975px;top:211px;width:1px;height:23.5px;background:#141414"></div>
<div style="position:absolute;left:999px;top:211px;width:1px;height:23.5px;background:#141414"></div>
<div style="position:absolute;left:1023px;top:211px;width:1px;height:23.5px;background:#141414"></div>
<div style="position:absolute;left:1047px;top:211px;width:1px;height:23.5px;background:#141414"></div>
<div style="position:absolute;left:1071px;top:211px;width:1px;height:23.5px;background:#141414"></div>
<div style="position:absolute;left:1095px;top:211px;width:1px;height:23.5px;background:#141414"></div>
<div style="position:absolute;left:1119px;top:211px;width:1px;height:23.5px;background:#141414"></div>
<svg style="position:absolute;left:956px;top:215px" width="16" height="16" viewBox="0 0 16 16"><rect x="1.5" y="1.8" width="3" height="2" rx="0.8" fill="#a0a0a0" stroke="#222" stroke-width="0.6"/><rect x="1" y="3.3" width="14" height="10" rx="1" fill="#5e5e5e" stroke="#1e1e1e" stroke-width="0.9"/><rect x="1.5" y="3.8" width="13" height="2.4" fill="#8a8a8a"/><circle cx="4" cy="5" r="0.8" fill="#333"/><circle cx="13" cy="5" r="0.8" fill="#333"/><circle cx="10" cy="9.6" r="3.4" fill="#7a7a7a" stroke="#2a2a2a" stroke-width="0.8"/><circle cx="10" cy="9.6" r="2" fill="#333"/><rect x="1.5" y="6.5" width="4" height="6.5" fill="#454545"/></svg><svg style="position:absolute;left:979px;top:214.5px" width="16" height="16" viewBox="0 0 16 16"><defs><linearGradient id="cyl1" x1="0" y1="0" x2="0" y2="1"><stop offset="0" stop-color="#d8ecff"/><stop offset="0.45" stop-color="#7aa4dc"/><stop offset="1" stop-color="#4a78c0"/></linearGradient><radialGradient id="sph1" cx="0.4" cy="0.35" r="0.7"><stop offset="0" stop-color="#ffffff"/><stop offset="1" stop-color="#9a9a9a"/></radialGradient></defs><circle cx="3.9" cy="2.9" r="2.8" fill="#e8e890" opacity="0.45"/><circle cx="3.9" cy="2.9" r="1.2" fill="#ffffb0"/><rect x="8.6" y="1.4" width="5.8" height="10.2" rx="2" fill="url(#cyl1)" stroke="#0e1a3a" stroke-width="1"/><circle cx="6.8" cy="10.8" r="3.6" fill="url(#sph1)" stroke="#111" stroke-width="1"/></svg>
<svg style="position:absolute;left:1003px;top:215px" width="16" height="16" viewBox="0 0 16 16"><circle cx="8" cy="8" r="6.8" fill="#2e3440" /><circle cx="8" cy="8" r="6" fill="#7890a8" stroke="#a8b4bc" stroke-width="0.9"/><path d="M3.2 5.5 Q5.5 2.6 8.2 3.4 Q8.8 6 7 6.8 Q5.2 7.6 6 10.8 Q3.6 9.6 3.2 5.5Z M9.6 8.6 Q12 8 13.4 9.8 Q12.4 12.8 9.8 12.6Z" fill="#46604a"/><path d="M6 12 Q8 13.5 10 12.8" stroke="#8aa0c8" stroke-width="1" fill="none"/></svg><svg style="position:absolute;left:1028px;top:215.5px" width="14" height="15" viewBox="0 0 14 15"><path d="M7 0.8 L13.2 4 L13.2 11 L7 14.2 L0.8 11 L0.8 4 Z" fill="#3a2e22" /><path d="M7 2 L12 4.5 L7 7 L2 4.5 Z" fill="#c8b494"/><path d="M2 4.8 L6.6 7.2 L6.6 13 L2 10.6 Z" fill="#b08a58"/><path d="M7.4 7.2 L12 4.8 L12 10.6 L7.4 13 Z" fill="#8e6a3e"/></svg><svg style="position:absolute;left:1051px;top:215px" width="17" height="16" viewBox="0 0 17 16"><g fill="none"><rect x="0.8" y="8" width="9" height="5" rx="2.5" transform="rotate(-40 5.3 10.5)" stroke="#202020" stroke-width="2.6"/><rect x="6.2" y="3" width="9" height="5" rx="2.5" transform="rotate(-40 10.7 5.5)" stroke="#202020" stroke-width="2.6"/><rect x="0.8" y="8" width="9" height="5" rx="2.5" transform="rotate(-40 5.3 10.5)" stroke="#bdbdbd" stroke-width="1.3"/><rect x="6.2" y="3" width="9" height="5" rx="2.5" transform="rotate(-40 10.7 5.5)" stroke="#bdbdbd" stroke-width="1.3"/></g></svg><svg style="position:absolute;left:1075px;top:214px" width="16" height="17" viewBox="0 0 16 17"><g stroke-linecap="round"><path d="M2.6 14.2 L9 7.8" stroke="#1e1e1e" stroke-width="3.6"/><circle cx="10.6" cy="6" r="4.2" fill="#1e1e1e"/><path d="M2.6 14.2 L9 7.8" stroke="#9aaccc" stroke-width="2"/><circle cx="10.6" cy="6" r="3.4" fill="#9aaccc"/><path d="M11.2 5.4 L15.5 1.1" stroke="#3c3c3c" stroke-width="2.6" stroke-linecap="butt"/></g><path d="M3 13.8 L8.6 8.2" stroke="#d8e0ee" stroke-width="0.6"/></svg><svg style="position:absolute;left:1099px;top:214px" width="16" height="17" viewBox="0 0 16 17"><path d="M2.8 4 L12.8 4 L7.8 13.8 Z" fill="none" stroke="#222" stroke-width="2.2"/><path d="M2.8 4 L12.8 4 L7.8 13.8 Z" fill="none" stroke="#b8b8b8" stroke-width="0.9"/><rect x="1" y="2.2" width="3.6" height="3.6" fill="#f0f0f0" stroke="#111" stroke-width="0.9"/><rect x="11" y="2.2" width="3.6" height="3.6" fill="#f0f0f0" stroke="#111" stroke-width="0.9"/><rect x="6" y="12" width="3.6" height="3.6" fill="#f0f0f0" stroke="#111" stroke-width="0.9"/></svg><svg style="position:absolute;left:1120px;top:214px" width="9" height="17"><defs><radialGradient id="mg" cx="0.7" cy="0.35" r="0.7"><stop offset="0" stop-color="#d0d0d0"/><stop offset="1" stop-color="#6a6a6a"/></radialGradient></defs><circle cx="11" cy="8.5" r="6.5" fill="url(#mg)" stroke="#2a2a2a" stroke-width="1"/></svg>
<div style="position:absolute;left:906px;top:238px;width:223px;height:249px;background:#727272"></div>
<div style="position:absolute;left:1126px;top:245px;width:12px;height:250px;box-sizing:border-box;border:1px solid #3e3e3e;border-radius:6px;background:#767676"></div>
<svg style="position:absolute;left:912px;top:244px" width="24" height="24" viewBox="0 0 24 24"><defs><linearGradient id="ping" x1="0" y1="0" x2="0" y2="1"><stop offset="0" stop-color="#ffffff"/><stop offset="1" stop-color="#9a9a9a"/></linearGradient></defs><g transform="translate(4.6,19.2) rotate(-45)" stroke="#111" stroke-width="1.1" stroke-linejoin="round" fill="url(#ping)"><rect x="0" y="-1.3" width="6.5" height="2.6" rx="1"/><path d="M6.2 -5.8 L6.2 5.8 L12.5 1.7 L12.5 -1.7 Z"/><rect x="12.3" y="-1.7" width="2.4" height="3.4"/><rect x="14.3" y="-2.9" width="4.6" height="5.8"/></g></svg><svg style="position:absolute;left:938px;top:248px" width="16" height="16" viewBox="0 0 16 16"><defs><linearGradient id="cyl2" x1="0" y1="0" x2="0" y2="1"><stop offset="0" stop-color="#d8ecff"/><stop offset="0.45" stop-color="#7aa4dc"/><stop offset="1" stop-color="#4a78c0"/></linearGradient><radialGradient id="sph2" cx="0.4" cy="0.35" r="0.7"><stop offset="0" stop-color="#ffffff"/><stop offset="1" stop-color="#9a9a9a"/></radialGradient></defs><circle cx="3.9" cy="2.9" r="2.8" fill="#e8e890" opacity="0.45"/><circle cx="3.9" cy="2.9" r="1.2" fill="#ffffb0"/><rect x="8.6" y="1.4" width="5.8" height="10.2" rx="2" fill="url(#cyl2)" stroke="#0e1a3a" stroke-width="1"/><circle cx="6.8" cy="10.8" r="3.6" fill="url(#sph2)" stroke="#111" stroke-width="1"/></svg>
<div class="t" style="left:955.5px;top:252.15px;font-size:11.4px;color:#000;transform-origin:0 0;transform:scaleX(0.939);">Scene</div>
<div style="position:absolute;left:911px;top:276px;width:211px;height:1px;background:#484848"></div>
<div style="position:absolute;left:911px;top:277px;width:211px;height:1px;background:#8a8a8a"></div>
<svg style="position:absolute;left:916px;top:282.8px" width="10" height="9.8"><polygon points="0,0 10,0 5.0,9.8" fill="#262626"/></svg>
<div class="t" style="left:931.1px;top:282.90px;font-size:12.4px;color:#000;transform-origin:0 0;transform:scaleX(0.965);transform-origin:0 0">Scene</div>
<svg style="position:absolute;left:1104px;top:280px" width="18" height="18"><path d="M0.5 0.5 L17 17" stroke="#5a5a5a" stroke-width="1" fill="none"/><path d="M0.5 1.5 L16 17" stroke="#8c8c8c" stroke-width="1" fill="none"/><path d="M5.5 0.5 L17 12" stroke="#5a5a5a" stroke-width="1" fill="none"/><path d="M5.5 1.5 L16 12" stroke="#8c8c8c" stroke-width="1" fill="none"/><path d="M10.5 0.5 L17 7" stroke="#5a5a5a" stroke-width="1" fill="none"/><path d="M10.5 1.5 L16 7" stroke="#8c8c8c" stroke-width="1" fill="none"/></svg>
<div class="t" style="left:919.5px;top:311.95px;font-size:11.4px;color:#000;transform-origin:0 0;transform:scaleX(0.988);">Camera:</div>
<div style="position:absolute;left:987px;top:306px;width:132px;height:20px;box-sizing:border-box;border:1px solid #2e2e2e;border-radius:4px;background:linear-gradient(#a4a4a4,#b8b8b8);box-shadow:0 1px 0 rgba(255,255,255,0.12);"></div>
<svg style="position:absolute;left:990.5px;top:308.5px" width="14" height="15" viewBox="0 0 14 15">
<path d="M7 0.8 L13.2 4 L13.2 11 L7 14.2 L0.8 11 L0.8 4 Z" fill="#5a3a10" />
<path d="M7 2 L12 4.5 L7 7 L2 4.5 Z" fill="#ffe0a8"/>
<path d="M2 4.8 L6.6 7.2 L6.6 13 L2 10.6 Z" fill="#f0b060"/>
<path d="M7.4 7.2 L12 4.8 L12 10.6 L7.4 13 Z" fill="#c87a28"/>
</svg>
<div class="t" style="left:1008px;top:311.95px;font-size:11.4px;color:#000;transform-origin:0 0;transform:scaleX(0.963);">Camera</div>
<div class="t" style="left:919.5px;top:336.75px;font-size:11.4px;color:#000;transform-origin:0 0;transform:scaleX(0.985);">Background</div>
<div style="position:absolute;left:987px;top:331px;width:132px;height:20px;box-sizing:border-box;border:1px solid #2e2e2e;border-radius:4px;background:linear-gradient(#a4a4a4,#b8b8b8);box-shadow:0 1px 0 rgba(255,255,255,0.12);"></div>
<svg style="position:absolute;left:992px;top:333px" width="16" height="16" viewBox="0 0 16 16"><defs><linearGradient id="cyl3" x1="0" y1="0" x2="0" y2="1"><stop offset="0" stop-color="#d8ecff"/><stop offset="0.45" stop-color="#7aa4dc"/><stop offset="1" stop-color="#4a78c0"/></linearGradient><radialGradient id="sph3" cx="0.4" cy="0.35" r="0.7"><stop offset="0" stop-color="#ffffff"/><stop offset="1" stop-color="#9a9a9a"/></radialGradient></defs><circle cx="3.9" cy="2.9" r="2.8" fill="#e8e890" opacity="0.45"/><circle cx="3.9" cy="2.9" r="1.2" fill="#ffffb0"/><rect x="8.6" y="1.4" width="5.8" height="10.2" rx="2" fill="url(#cyl3)" stroke="#0e1a3a" stroke-width="1"/><circle cx="6.8" cy="10.8" r="3.6" fill="url(#sph3)" stroke="#111" stroke-width="1"/></svg>
<div style="position:absolute;left:911px;top:361px;width:211px;height:1px;background:#484848"></div>
<div style="position:absolute;left:911px;top:362px;width:211px;height:1px;background:#8a8a8a"></div>
<svg style="position:absolute;left:916px;top:368px" width="10" height="9.9"><polygon points="0,0 10,0 5.0,9.9" fill="#262626"/></svg>
<div class="t" style="left:931.1px;top:368.20px;font-size:12.4px;color:#000;transform-origin:0 0;">Units</div>
<svg style="position:absolute;left:1104px;top:365px" width="18" height="18"><path d="M0.5 0.5 L17 17" stroke="#5a5a5a" stroke-width="1" fill="none"/><path d="M0.5 1.5 L16 17" stroke="#8c8c8c" stroke-width="1" fill="none"/><path d="M5.5 0.5 L17 12" stroke="#5a5a5a" stroke-width="1" fill="none"/><path d="M5.5 1.5 L16 12" stroke="#8c8c8c" stroke-width="1" fill="none"/><path d="M10.5 0.5 L17 7" stroke="#5a5a5a" stroke-width="1" fill="none"/><path d="M10.5 1.5 L16 7" stroke="#8c8c8c" stroke-width="1" fill="none"/></svg>
<div style="position:absolute;left:914px;top:391px;width:68px;height:20px;box-sizing:border-box;border:1px solid #1a1a1a;border-radius:5px;background:linear-gradient(#575757,#393939);box-shadow:0 1px 0 rgba(255,255,255,0.12);border-radius:5px 0 0 5px"></div>
<div style="position:absolute;left:981px;top:391px;width:69px;height:20px;box-sizing:border-box;border:1px solid #1a1a1a;border-radius:0px;background:linear-gradient(#6a92d4,#4872b6);box-shadow:0 1px 0 rgba(255,255,255,0.12);"></div>
<div style="position:absolute;left:1049px;top:391px;width:70px;height:20px;box-sizing:border-box;border:1px solid #1a1a1a;border-radius:5px;background:linear-gradient(#575757,#393939);box-shadow:0 1px 0 rgba(255,255,255,0.12);border-radius:0 5px 5px 0"></div>
<div class="t" style="left:914px;width:68px;text-align:center;top:396.55px;font-size:11.4px;color:#fff;transform-origin:50% 0;transform:scaleX(0.965);">None</div>
<div class="t" style="left:981px;width:69px;text-align:center;top:396.55px;font-size:11.4px;color:#000;transform-origin:50% 0;transform:scaleX(1.010);">Metric</div>
<div class="t" style="left:1049px;width:70px;text-align:center;top:396.55px;font-size:11.4px;color:#fff;transform-origin:50% 0;transform:scaleX(1.033);">Imperial</div>
<div style="position:absolute;left:914px;top:416px;width:98px;height:20px;box-sizing:border-box;border:1px solid #2a2a2a;border-radius:10px;background:linear-gradient(#a6a6a6,#bcbcbc);box-shadow:0 1px 0 rgba(255,255,255,0.12);"></div>
<svg style="position:absolute;left:921.5px;top:422.7px" width="5" height="7"><polygon points="5,0 0,3.5 5,7" fill="#707070"/></svg>
<svg style="position:absolute;left:999.5px;top:422.7px" width="5" height="7"><polygon points="0,0 5,3.5 0,7" fill="#707070"/></svg>
<div class="t" style="left:930px;top:421.95px;font-size:11.4px;color:#000;transform-origin:0 0;transform:scaleX(1.015);">Scale: 1.000</div>
<div style="position:absolute;left:1023px;top:419px;width:14px;height:14px;box-sizing:border-box;border:1px solid #222;border-radius:3px;background:linear-gradient(#3c3c3c,#565656);box-shadow:0 1px 0 rgba(255,255,255,0.12);"></div>
<div class="t" style="left:1043px;top:421.95px;font-size:11.4px;color:#000;transform-origin:0 0;transform:scaleX(0.973);">Separate Units</div>
<div class="t" style="left:919.5px;top:447.15px;font-size:11.4px;color:#000;transform-origin:0 0;transform:scaleX(0.985);">Rotation Un</div>
<div style="position:absolute;left:987px;top:441px;width:132px;height:20px;box-sizing:border-box;border:1px solid #1a1a1a;border-radius:5px;background:linear-gradient(#575757,#393939);box-shadow:0 1px 0 rgba(255,255,255,0.12);"></div>
<div class="t" style="left:992.5px;top:446.65px;font-size:11.4px;color:#fff;transform-origin:0 0;transform:scaleX(0.969);">Degrees</div>
<svg style="position:absolute;left:1105px;top:444px" width="9" height="14"><path d="M0.5 5.5L4.5 0.5L8.5 5.5Z M0.5 8.5L4.5 13.5L8.5 8.5Z" fill="#e8e8e8"/></svg><div style="position:absolute;left:911px;top:471px;width:211px;height:1px;background:#484848"></div>
<div style="position:absolute;left:911px;top:472px;width:211px;height:1px;background:#8a8a8a"></div>
<svg style="position:absolute;left:916px;top:478px" width="10" height="9.9"><polygon points="0,0 10,0 5.0,9.9" fill="#262626"/></svg>
<div class="t" style="left:931.1px;top:478.40px;font-size:12.4px;color:#000;transform-origin:0 0;">Keying Sets</div>
<svg style="position:absolute;left:1104px;top:475px" width="18" height="18"><path d="M0.5 0.5 L17 17" stroke="#5a5a5a" stroke-width="1" fill="none"/><path d="M0.5 1.5 L16 17" stroke="#8c8c8c" stroke-width="1" fill="none"/><path d="M5.5 0.5 L17 12" stroke="#5a5a5a" stroke-width="1" fill="none"/><path d="M5.5 1.5 L16 12" stroke="#8c8c8c" stroke-width="1" fill="none"/><path d="M10.5 0.5 L17 7" stroke="#5a5a5a" stroke-width="1" fill="none"/><path d="M10.5 1.5 L16 7" stroke="#8c8c8c" stroke-width="1" fill="none"/></svg>

</body></html>
